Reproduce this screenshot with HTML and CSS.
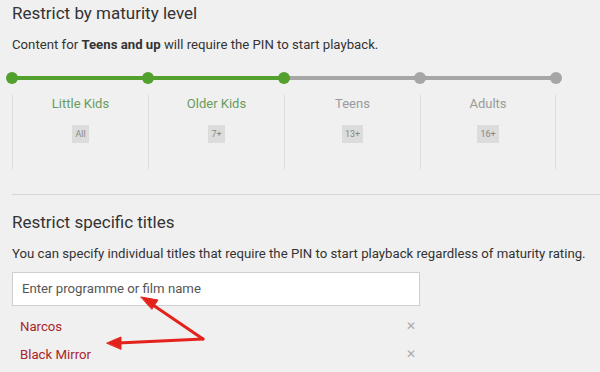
FILE: index.html
```html
<!DOCTYPE html>
<html lang="en">
<head>
  <meta charset="UTF-8" />
  <title>Restrictions</title>
  <link rel="stylesheet" href="styles.css">
</head>
<body>
  <section class="maturity">
    <h2>Restrict by maturity level</h2>
    <p class="desc">Content for <b>Teens and up</b> will require the PIN to start playback.</p>

    <div class="track">
      <span class="dot on"></span>
      <span class="seg on"></span>
      <span class="dot on"></span>
      <span class="seg on"></span>
      <span class="dot on"></span>
      <span class="seg"></span>
      <span class="dot"></span>
      <span class="seg"></span>
      <span class="dot"></span>
    </div>

    <div class="levels">
      <div class="level on">
        <div class="level-name">Little Kids</div>
        <span class="badge">All</span>
      </div>
      <div class="level on">
        <div class="level-name">Older Kids</div>
        <span class="badge">7+</span>
      </div>
      <div class="level">
        <div class="level-name">Teens</div>
        <span class="badge">13+</span>
      </div>
      <div class="level">
        <div class="level-name">Adults</div>
        <span class="badge">16+</span>
      </div>
    </div>
  </section>

  <hr class="rule" />

  <section class="titles">
    <h2>Restrict specific titles</h2>
    <p class="desc">You can specify individual titles that require the PIN to start playback regardless of maturity rating.</p>
    <div class="search">Enter programme or film name</div>
    <ul class="title-list">
      <li><span>Narcos</span><span class="remove">&#x2715;</span></li>
      <li><span>Black Mirror</span><span class="remove">&#x2715;</span></li>
    </ul>
  </section>

  <!-- annotation arrows -->
  <svg class="arrows" width="600" height="372" viewBox="0 0 600 372">
    <g fill="#e3221b" stroke="#e3221b" stroke-linecap="round">
      <line x1="203" y1="339" x2="150" y2="303" stroke-width="3" />
      <polygon points="141,297 158,300 152,309" />
      <line x1="203" y1="339" x2="118" y2="343" stroke-width="3" />
      <polygon points="107,343 121,337 121,349" />
    </g>
  </svg>
</body>
</html>
```

FILE: styles.css
```css
body {
  margin: 0;
  padding: 0 0 0 12px;
  background-color: #f0f0f0;
  color: #333;
  font-family: 'Roboto', 'Liberation Sans', sans-serif;
  position: relative;
  overflow: hidden;
}

h2 {
  margin: 0;
  font-size: 17px;
  font-weight: 400;
  color: #333;
}

.maturity h2 {
  padding-top: 2px;
  line-height: 22px;
}

.desc {
  margin: 0;
  font-size: 13.2px;
  line-height: 18px;
  color: #333;
}

.maturity .desc {
  margin-top: 12px;
}

.desc b {
  font-weight: 700;
}

/* slider */
.track {
  display: flex;
  align-items: center;
  margin-top: 18px;
  margin-left: -6px;
  height: 12px;
}

.dot {
  width: 12px;
  height: 12px;
  border-radius: 50%;
  background-color: #a6a6a6;
  flex: 0 0 12px;
  position: relative;
  z-index: 1;
}

.dot.on {
  background-color: #52a02e;
}

.seg {
  flex: 0 0 136px;
  height: 4px;
  margin: 0 -6px;
  background-color: #a6a6a6;
}

.seg.on {
  background-color: #52a02e;
}

.levels {
  display: grid;
  grid-template-columns: repeat(4, 136px);
  margin-top: 11px;
}

.level {
  border-left: 1px solid #dcdcdc;
  height: 74px;
  display: flex;
  flex-direction: column;
  align-items: center;
}

.level:last-child {
  border-right: 1px solid #dcdcdc;
}

.level-name {
  margin-top: 1px;
  font-size: 13px;
  line-height: 16px;
  color: #9a9a9a;
}

.level.on .level-name {
  color: #6a9c5c;
}

.badge {
  margin-top: 13px;
  min-width: 17px;
  padding: 0 3px;
  box-sizing: border-box;
  height: 18px;
  line-height: 18px;
  text-align: center;
  font-size: 9px;
  background-color: #dcdcdc;
  color: #888;
}

.rule {
  margin: 25px 0 0 0;
  border: 0;
  border-top: 1px solid #d6d6d6;
}

/* titles */
.titles h2 {
  margin-top: 16px;
  line-height: 22px;
}

.titles .desc {
  margin-top: 12px;
}

.search {
  margin-top: 9px;
  width: 408px;
  height: 34px;
  box-sizing: border-box;
  border: 1px solid #cfcfcf;
  background-color: #fff;
  padding-left: 9px;
  font-size: 13.2px;
  line-height: 32px;
  color: #555;
}

.title-list {
  list-style: none;
  margin: 6px 0 0 0;
  padding: 0;
  width: 404px;
}

.title-list li {
  display: flex;
  justify-content: space-between;
  align-items: center;
  height: 28px;
  padding-left: 8px;
  font-size: 13.2px;
  color: #a8262b;
}

.remove {
  color: #aaa;
  font-size: 12px;
}

.arrows {
  position: absolute;
  left: 0;
  top: 0;
  pointer-events: none;
}
```
